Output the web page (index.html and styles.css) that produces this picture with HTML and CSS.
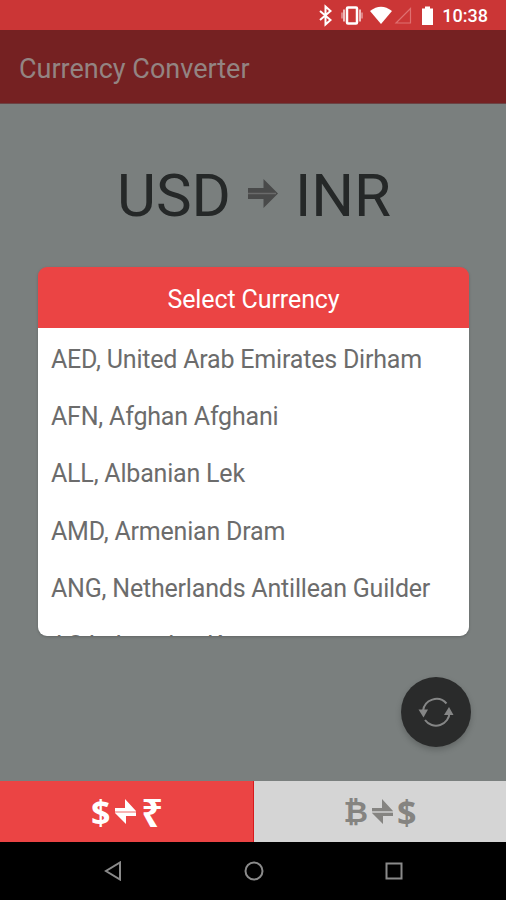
FILE: index.html
```
<!DOCTYPE html>
<html lang="en">

<head>
    <meta charset="utf-8">
    <title>Currency Converter</title>
    <link rel="stylesheet" href="styles.css">
</head>

<body>
    <div class="screen">
        <div class="status-bar">
            <svg width="132" height="30" viewBox="0 0 132 30">
                <!-- bluetooth -->
                <path d="M10 11l10.500 9-5 4.500V6.500l5 4.500L10 20" fill="none" stroke="#fff" stroke-width="2" />
                <!-- vibrate -->
                <rect x="37" y="7.500" width="10" height="16" rx="1" fill="none" stroke="#fff" stroke-width="2.500" />
                <path d="M34 9.500v12M50 9.500v12" stroke="#f0bcbc" stroke-width="2" />
                <path d="M32 12.500v6M52 12.500v6" stroke="#e59a9a" stroke-width="1.500" />
                <!-- wifi -->
                <path d="M60 11Q71 2.500 82 11L71 24z" fill="#fff" />
                <!-- signal -->
                <path d="M100.500 8.500v14.500H86z" fill="none" stroke="#df7070" stroke-width="1.200" />
                <!-- battery -->
                <path d="M112 8.500h3V6.500h5v2h3V25h-11z" fill="#fff" />
            </svg>
            <span class="clock">10:38</span>
        </div>

        <div class="app-bar">
            <h1>Currency Converter</h1>
        </div>

        <div class="content">
            <div class="pair">
                <span>USD</span>
                <svg width="30" height="32" viewBox="0 0 30 32">
                    <path d="M0 10h15.500V1L30 15.500 15.500 30V21H0z" fill="#494a4a" />
                    <path d="M0 15.500h28" stroke="#6a6b6b" stroke-width="1.500" />
                </svg>
                <span>INR</span>
            </div>

            <div class="dialog">
                <h2>Select Currency</h2>
                <ul>
                    <li>AED, United Arab Emirates Dirham</li>
                    <li>AFN, Afghan Afghani</li>
                    <li>ALL, Albanian Lek</li>
                    <li>AMD, Armenian Dram</li>
                    <li>ANG, Netherlands Antillean Guilder</li>
                    <li>AOA, Angolan Kwanza</li>
                </ul>
            </div>

            <button class="refresh" aria-label="Refresh">
                <svg width="36" height="36" viewBox="0 0 36 36">
                    <path d="M5 17A13.500 13.500 0 0 1 28.500 9.500M31.500 18A13.500 13.500 0 0 1 7 26" fill="none" stroke="#858686" stroke-width="2" />
                    <path d="M.500 15.500h9.500l-4.500 8zM26 21h9.500l-4.500-8z" fill="#858686" />
                </svg>
            </button>
        </div>

        <div class="tabs">
            <div class="tab active">
                <span class="dollar">$</span>
                <svg width="21" height="26" viewBox="0 0 21 26">
                    <path d="M0 12V9h10V0l11 12zM21 14v3H11v8L0 14z" fill="currentColor" />
                    <path d="M0 13h21" stroke="currentColor" stroke-width="2" opacity=".6" />
                </svg>
                <span class="rupee">₹</span>
            </div>
            <div class="tab">
                <span class="bitcoin">₿</span>
                <svg width="21" height="26" viewBox="0 0 21 26">
                    <path d="M0 12V9h10V0l11 12zM21 14v3H11v8L0 14z" fill="currentColor" />
                    <path d="M0 13h21" stroke="currentColor" stroke-width="2" opacity=".3" />
                </svg>
                <span class="dollar">$</span>
            </div>
        </div>

        <div class="nav-bar">
            <svg width="18" height="20" viewBox="0 0 18 20">
                <path d="M16 1.500v17L2 10z" fill="none" stroke="#8a8a8a" stroke-width="2" />
            </svg>
            <svg width="20" height="20" viewBox="0 0 20 20">
                <circle cx="10" cy="10" r="8.500" fill="none" stroke="#8a8a8a" stroke-width="2" />
            </svg>
            <svg width="18" height="18" viewBox="0 0 18 18">
                <rect x="1.500" y="1.500" width="15" height="15" fill="none" stroke="#8a8a8a" stroke-width="2" />
            </svg>
        </div>
    </div>
</body>

</html>
```
FILE: styles.css
```
* {
    box-sizing: border-box;
}

body {
    margin: 0;
    font-family: Roboto, sans-serif;
}

.screen {
    width: 506px;
    height: 900px;
    display: flex;
    flex-direction: column;
    overflow: hidden;
    background: #7a7f7e;
}

.status-bar {
    height: 30px;
    display: flex;
    justify-content: flex-end;
    align-items: center;
    padding-right: 18px;
    background: #cb3636;
    color: #fff;
}

.clock {
    font-size: 18px;
    font-weight: 500;
}

.app-bar {
    height: 74px;
    display: flex;
    align-items: center;
    padding: 4px 0 0 19px;
    background: #752122;
    border-bottom: 1px solid #6b4344;
}

h1 {
    margin: 0;
    font-size: 27px;
    font-weight: 400;
    color: #938482;
}

.content {
    height: 677px;
    display: flex;
    flex-direction: column;
}

.pair {
    height: 163px;
    display: flex;
    justify-content: center;
    align-items: center;
    gap: 17px;
    padding: 20px 0 0 2px;
    font-size: 60px;
    color: #252828;
}

.pair svg {
    margin-bottom: 4px;
}

.dialog {
    width: 431px;
    height: 369px;
    margin-left: 38px;
    border-radius: 9px;
    overflow: hidden;
    box-shadow: 0 1px 3px rgba(0, 0, 0, 0.2);
}

h2 {
    height: 61px;
    margin: 0;
    line-height: 66px;
    text-align: center;
    font-size: 25px;
    font-weight: 400;
    letter-spacing: -0.1px;
    background: #eb4444;
    color: #fff;
}

ul {
    margin: 0;
    padding: 1px 0 0 13px;
    list-style: none;
    background: #fff;
}

/* the last row just peeks over the bottom edge */
li {
    height: 57.200px;
    line-height: 61px;
    font-size: 25px;
    letter-spacing: -0.200px;
    color: #6c6c6c;
    white-space: nowrap;
}

.refresh {
    width: 70px;
    height: 70px;
    margin: 41px 0 0 401px;
    padding: 0;
    display: flex;
    justify-content: center;
    align-items: center;
    border: none;
    border-radius: 50%;
    background: #2a2b2b;
    box-shadow: 0 3px 6px rgba(0, 0, 0, 0.2);
}

.tabs {
    height: 61px;
    display: grid;
    grid-template-columns: 254px 252px;
}

.tab {
    display: flex;
    justify-content: center;
    align-items: center;
    gap: 4px;
    font-weight: 700;
    line-height: 60px;
    background: #d5d5d5;
    color: #858481;
}

.tab.active {
    gap: 5px;
    padding-left: 1px;
    background: #eb4444;
    border-right: 1px solid #d8191c;
    color: #fff;
}

.dollar {
    font-family: "Noto Sans", sans-serif;
    font-size: 34px;
}

.rupee {
    font-family: "Noto Sans", sans-serif;
    font-size: 38px;
}

.bitcoin {
    font-family: "DejaVu Sans", sans-serif;
    font-size: 30px;
}

.nav-bar {
    height: 58px;
    display: flex;
    justify-content: space-between;
    align-items: center;
    padding: 0 103px 0 104px;
    background: #000;
}
```
